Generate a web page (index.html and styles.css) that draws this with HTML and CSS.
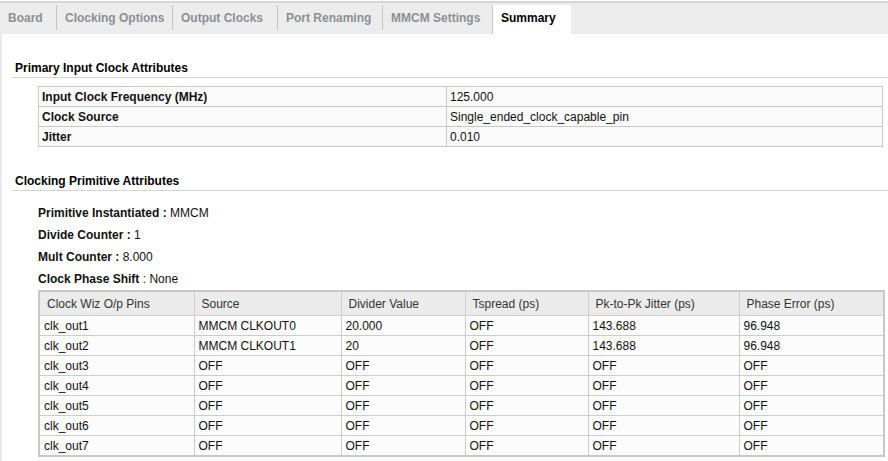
FILE: index.html
```html
<!DOCTYPE html>
<html>
<head>
<meta charset="utf-8">
<link rel="stylesheet" href="styles.css">
</head>
<body>
<div class="app">
  <div class="tabbar">
    <div class="tab t1">Board</div>
    <div class="tab t2">Clocking Options</div>
    <div class="tab t3">Output Clocks</div>
    <div class="tab t4">Port Renaming</div>
    <div class="tab t5">MMCM Settings</div>
    <div class="tab active">Summary</div>
  </div>
  <div class="content">
    <div class="section-title first">Primary Input Clock Attributes</div>
    <table class="attr">
      <tr><td class="lbl">Input Clock Frequency (MHz)</td><td class="val">125.000</td></tr>
      <tr><td class="lbl">Clock Source</td><td class="val">Single_ended_clock_capable_pin</td></tr>
      <tr><td class="lbl">Jitter</td><td class="val">0.010</td></tr>
    </table>
    <div class="section-title second">Clocking Primitive Attributes</div>
    <div class="info">
      <div class="line"><b>Primitive Instantiated :</b> MMCM</div>
      <div class="line"><b>Divide Counter :</b> 1</div>
      <div class="line"><b>Mult Counter :</b> 8.000</div>
      <div class="line"><b>Clock Phase Shift</b> : None</div>
    </div>
    <table class="clk">
      <colgroup>
        <col class="c1"><col class="c2"><col class="c3"><col class="c4"><col class="c5"><col class="c6">
      </colgroup>
      <thead>
        <tr><th>Clock Wiz O/p Pins</th><th>Source</th><th>Divider Value</th><th>Tspread (ps)</th><th>Pk-to-Pk Jitter (ps)</th><th>Phase Error (ps)</th></tr>
      </thead>
      <tbody>
        <tr><td>clk_out1</td><td>MMCM CLKOUT0</td><td>20.000</td><td>OFF</td><td>143.688</td><td>96.948</td></tr>
        <tr><td>clk_out2</td><td>MMCM CLKOUT1</td><td>20</td><td>OFF</td><td>143.688</td><td>96.948</td></tr>
        <tr><td>clk_out3</td><td>OFF</td><td>OFF</td><td>OFF</td><td>OFF</td><td>OFF</td></tr>
        <tr><td>clk_out4</td><td>OFF</td><td>OFF</td><td>OFF</td><td>OFF</td><td>OFF</td></tr>
        <tr><td>clk_out5</td><td>OFF</td><td>OFF</td><td>OFF</td><td>OFF</td><td>OFF</td></tr>
        <tr><td>clk_out6</td><td>OFF</td><td>OFF</td><td>OFF</td><td>OFF</td><td>OFF</td></tr>
        <tr><td>clk_out7</td><td>OFF</td><td>OFF</td><td>OFF</td><td>OFF</td><td>OFF</td></tr>
      </tbody>
    </table>
  </div>
</div>
</body>
</html>
```

FILE: styles.css
```css
html, body {
  margin: 0;
  padding: 0;
  background: #ffffff;
}
body {
  font-family: "Liberation Sans", Arial, sans-serif;
  font-size: 12px;
  color: #111111;
  width: 888px;
  height: 461px;
  overflow: hidden;
}
.app {
  height: 460px;
  margin-top: 1px;
  border-left: 2px solid #e8e8e8;
}
.tabbar {
  display: flex;
  align-items: flex-start;
  height: 29px;
  padding-top: 2px;
  background: #ececec;
  border-top: 2px solid #d6d6d6;
  margin-left: -2px;
}
.tab {
  height: 25px;
  line-height: 27px;
  font-weight: bold;
  color: #8c8f94;
  padding-left: 8px;
  box-sizing: border-box;
  border-left: 1px solid #c4c4c4;
  white-space: nowrap;
}
.t1 { width: 56px; border-left: none; }
.t2 { width: 116px; }
.t3 { width: 105px; }
.t4 { width: 105px; }
.t5 { width: 110px; }
.tab.active {
  width: 79px;
  height: 29px;
  line-height: 27px;
  background: #ffffff;
  color: #000000;
}
.section-title {
  font-weight: bold;
  color: #000000;
  line-height: 16px;
  padding-left: 3px;
  padding-bottom: 1px;
  margin-left: 10px;
  border-bottom: 1px solid #d4d4d4;
}
.section-title.first {
  margin-top: 26px;
}
.section-title.second {
  margin-top: 26px;
}
table {
  border-collapse: collapse;
  margin-left: 36px;
  width: 845px;
  table-layout: fixed;
}
.attr {
  margin-top: 8px;
  background: #fafafa;
  border: 1px solid #c2c2c2;
}
.attr td {
  border: 1px solid #c8c8c8;
  height: 19px;
  padding: 0 0 0 3px;
  line-height: 18px;
  white-space: nowrap;
}
.attr td.lbl {
  width: 404px;
  font-weight: bold;
}
.info {
  margin-top: 11px;
  margin-left: 36px;
}
.info .line {
  line-height: 22px;
  height: 22px;
}
.clk {
  margin-top: 0;
  width: 845px;
  border: 2px solid #c8c8c8;
  background: #fcfcfc;
}
.c1 { width: 155px; }
.c2 { width: 147px; }
.c3 { width: 124px; }
.c4 { width: 123px; }
.c5 { width: 151px; }
.c6 { width: 145px; }
.clk th {
  background: #ebebeb;
  font-weight: normal;
  color: #333333;
  text-align: left;
  height: 23px;
  padding: 0 0 0 7px;
  border: 1px solid #d0d0d0;
  white-space: nowrap;
}
.clk td {
  height: 19px;
  line-height: 18px;
  padding: 0 0 0 4px;
  border: 1px solid #cccccc;
  white-space: nowrap;
}
```
